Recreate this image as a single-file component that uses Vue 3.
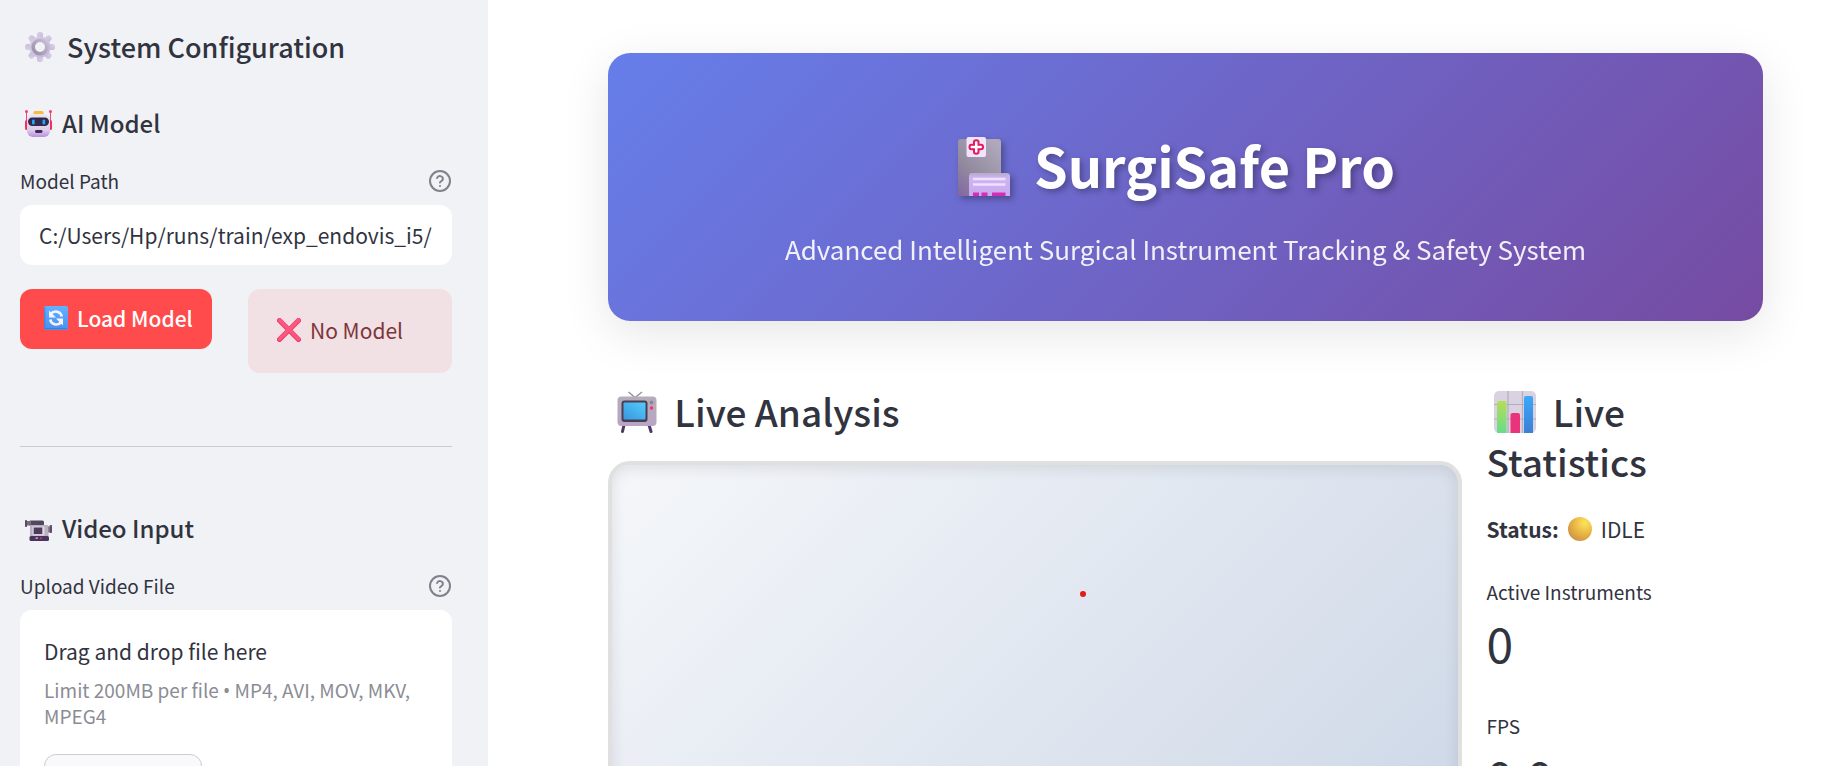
<script setup>
import { ref } from 'vue'

const modelPath = ref('C:/Users/Hp/runs/train/exp_endovis_i5/')
const metrics = [
  { label: 'Active Instruments', value: '0' },
  { label: 'FPS', value: '0.0' },
]
</script>

<template>
  <div class="shell">
    <aside class="sidebar">
      <h2 class="side-title">
        <svg class="gear" viewBox="0 0 30 30" aria-hidden="true">
          <defs>
            <linearGradient id="gearBody" x1="0" y1="0" x2="1" y2="1">
              <stop offset="0" stop-color="#d9d2e6" /><stop offset="1" stop-color="#c3b4da" />
            </linearGradient>
            <linearGradient id="gearRing" x1="1" y1="0" x2="0" y2="1">
              <stop offset="0" stop-color="#c6bfd0" /><stop offset="1" stop-color="#9a8dab" />
            </linearGradient>
          </defs>
          <g fill="url(#gearBody)">
            <rect v-for="n in 8" :key="n" x="12" y="0" width="6" height="9" rx="2.6" :transform="`rotate(${n * 45} 15 15)`" />
            <circle cx="15" cy="15" r="10.6" />
          </g>
          <circle cx="15" cy="15" r="6.8" fill="#f0f2f6" stroke="url(#gearRing)" stroke-width="3.6" />
        </svg>
        <span>System Configuration</span>
      </h2>

      <h3 class="side-heading">
        <svg class="side-icon" viewBox="0 0 27 27" aria-hidden="true">
          <defs>
            <linearGradient id="botFace" x1="0" y1="0" x2="0" y2="1">
              <stop offset="0" stop-color="#ece6f3" /><stop offset=".7" stop-color="#dccdea" /><stop offset="1" stop-color="#bb8fe0" />
            </linearGradient>
          </defs>
          <path d="M1.5 1.5V12M25.5 1.5V12" stroke="#ef4672" stroke-width="1" />
          <circle cx="1.5" cy="1.6" r="1.5" fill="#fa3c64" /><circle cx="25.5" cy="1.6" r="1.5" fill="#fa3c64" />
          <rect x="0" y="10" width="3" height="10" rx="1.5" fill="#f52e62" /><rect x="24" y="10" width="3" height="10" rx="1.5" fill="#f52e62" />
          <rect x="8.5" y="1" width="10" height="4" rx="1.5" fill="#f9bd3c" />
          <rect x="2" y="4" width="23" height="23" rx="6" fill="url(#botFace)" />
          <rect x="3" y="7.5" width="21" height="8.5" rx="4.2" fill="#35284f" />
          <rect x="7" y="9.5" width="2.7" height="5" rx="1.3" fill="#1fa9f5" /><rect x="17.5" y="9.5" width="2.7" height="5" rx="1.3" fill="#1fa9f5" />
          <rect x="10" y="20" width="7.5" height="3" rx="1.4" fill="#3d2a56" />
        </svg>
        <span>AI Model</span>
      </h3>

      <div class="field-head">
        <label for="model-path">Model Path</label>
        <button class="help" type="button" aria-label="Help for model path">
          <svg viewBox="0 0 24 24" aria-hidden="true"><circle cx="12" cy="12" r="10" /><path d="M9.1 9a3 3 0 0 1 5.8 1c0 2-3 2.7-3 3.5M12 17h.01" /></svg>
        </button>
      </div>
      <input id="model-path" v-model="modelPath" class="text-input" type="text" />

      <div class="model-row">
        <button class="load" type="button">
          <svg class="inline-icon" viewBox="0 0 24 24" aria-hidden="true">
            <defs>
              <linearGradient id="syncTile" x1="0" y1="0" x2="0" y2="1"><stop offset="0" stop-color="#62b1ff" /><stop offset="1" stop-color="#4a90ec" /></linearGradient>
            </defs>
            <rect width="24" height="24" rx="2" fill="url(#syncTile)" />
            <path d="M.8 1.5V22.5H22.5" fill="none" stroke="#3f7fdd" stroke-width="1" />
            <path d="M7 7.7A6.2 6.2 0 0 1 17.8 10.5M17 16.3A6.2 6.2 0 0 1 6.2 13.5" fill="none" stroke="#f4f3ff" stroke-width="2.6" />
            <path d="M5 4.5V11.5H12ZM19 19.5V12.5H12Z" fill="#f4f3ff" />
          </svg>
          <span>Load Model</span>
        </button>
        <div class="alert" role="status">
          <svg class="inline-icon" viewBox="0 0 24 24" aria-hidden="true">
            <path d="M2.5 2.5L21.5 21.5M21.5 2.5L2.5 21.5" stroke="#e83a68" stroke-width="5" stroke-linecap="round" />
            <path d="M2.6 2.2L21.5 21M21.5 2.2L2.6 21" stroke="#ff5680" stroke-width="3.6" stroke-linecap="round" />
          </svg>
          <span>No Model</span>
        </div>
      </div>

      <hr class="rule" />

      <h3 class="side-heading">
        <svg class="side-icon" viewBox="0 0 27 27" aria-hidden="true">
          <rect x="4" y="5.5" width="15" height="5" rx="1.5" fill="#54465f" />
          <rect x="1" y="6" width="5" height="4.5" fill="#786b80" /><rect x="0" y="5" width="2" height="7" rx=".8" fill="#5b4967" />
          <rect x="5" y="10" width="18.5" height="12" rx="1.5" fill="#b9b0c0" />
          <rect x="7.5" y="11.5" width="12" height="9" rx="1" fill="#e1dae6" /><rect x="8.7" y="12.5" width="8.6" height="6.6" fill="#4d3c5c" />
          <rect x="23" y="11.5" width="2" height="6" fill="#8f8298" /><rect x="24.6" y="10" width="2.4" height="8" rx=".8" fill="#604e6d" />
          <rect x="4.5" y="21" width="19.5" height="5" rx="1.5" fill="#4b335f" />
          <rect x="10.5" y="22.5" width="2.5" height="1.2" fill="#d4cbdc" /><circle cx="16" cy="23.2" r="1" fill="#f22b55" />
        </svg>
        <span>Video Input</span>
      </h3>

      <div class="field-head">
        <span id="upload-label">Upload Video File</span>
        <button class="help" type="button" aria-label="Help for video upload">
          <svg viewBox="0 0 24 24" aria-hidden="true"><circle cx="12" cy="12" r="10" /><path d="M9.1 9a3 3 0 0 1 5.8 1c0 2-3 2.7-3 3.5M12 17h.01" /></svg>
        </button>
      </div>
      <section class="dropzone" aria-labelledby="upload-label">
        <p class="drop-title">Drag and drop file here</p>
        <p class="drop-limit">Limit 200MB per file <span class="bullet">•</span> MP4, AVI, MOV, MKV, MPEG4</p>
        <button class="browse" type="button">Browse files</button>
      </section>
    </aside>

    <main class="main">
      <header class="banner">
        <h1 class="banner-title">
          <svg class="hospital" viewBox="0 0 52 60" aria-hidden="true">
            <defs>
              <linearGradient id="towerFill" x1="0" y1="1" x2=".8" y2="0"><stop offset="0" stop-color="#8365a3" /><stop offset=".4" stop-color="#918a9e" /><stop offset="1" stop-color="#b0a9bb" /></linearGradient>
              <linearGradient id="wingFill" x1="0" y1="0" x2="0" y2="1"><stop offset="0" stop-color="#b6aac9" /><stop offset=".2" stop-color="#cdb4ef" /><stop offset="1" stop-color="#c9aaf0" /></linearGradient>
            </defs>
            <path d="M0 59V5Q0 2 3 2H40Q43 2 43 5V59Z" fill="url(#towerFill)" />
            <path d="M11 59V39Q11 36 14 36H49Q52 36 52 39V59Z" fill="url(#wingFill)" />
            <path d="M15 42H47.5M15 47.5H47.5" stroke="#eee0ff" stroke-width="2.6" />
            <path d="M15 59V55.5H21V59ZM23.5 59V55.5H29.5V59ZM34 59V55.5H47.5V59Z" fill="#d62cb6" />
            <rect x="8.5" y="0" width="19.5" height="20" rx="2" fill="#f0e3fa" />
            <path d="M16 7V5Q16 3.2 18.25 3.2T20.5 5V7.7H23Q25 7.7 25 10T23 12.3H20.5V15Q20.5 16.8 18.25 16.8T16 15V12.3H13.5Q11.5 12.3 11.5 10T13.5 7.7H16Z" fill="#fff" stroke="#e3175c" stroke-width="2" />
          </svg>
          <span>SurgiSafe Pro</span>
        </h1>
        <p class="banner-sub">Advanced Intelligent Surgical Instrument Tracking &amp; Safety System</p>
      </header>

      <div class="columns">
        <section>
          <h2 class="section-title">
            <svg class="title-icon" viewBox="0 0 42 42" aria-hidden="true">
              <defs>
                <linearGradient id="tvScreen" x1="1" y1="0" x2="0" y2="1"><stop offset="0" stop-color="#50cdfc" /><stop offset="1" stop-color="#3b95df" /></linearGradient>
                <linearGradient id="tvBody" x1="0" y1="0" x2="0" y2="1"><stop offset="0" stop-color="#b5adb9" /><stop offset="1" stop-color="#b8a5c5" /></linearGradient>
              </defs>
              <path d="M12.5 1L19 6.5L26 1" fill="none" stroke="#96919b" stroke-width="1.4" />
              <path d="M8 34L6.5 40.5M33 34L35 40.5" stroke="#4e3764" stroke-width="3" stroke-linecap="round" />
              <rect x="1.5" y="5.5" width="39" height="29.5" rx="4" fill="url(#tvBody)" />
              <rect x="5.5" y="9.5" width="26" height="21.5" rx="3" fill="#493e54" />
              <rect x="7.5" y="11.5" width="22" height="17" rx="1" fill="url(#tvScreen)" />
              <circle cx="35.5" cy="11.5" r="1.9" fill="#8e8797" /><circle cx="35.5" cy="17" r="1.7" fill="#f23367" />
            </svg>
            Live Analysis
          </h2>
          <div class="video">
            <span class="marker"></span>
          </div>
        </section>

        <section>
          <h2 class="section-title">
            <svg class="title-icon" viewBox="0 0 42 42" aria-hidden="true">
              <defs>
                <linearGradient id="barGreen" x1="0" y1="0" x2="0" y2="1"><stop offset="0" stop-color="#b3df55" /><stop offset="1" stop-color="#67dc8a" /></linearGradient>
                <linearGradient id="barBlue" x1="0" y1="0" x2="0" y2="1"><stop offset="0" stop-color="#3ba8fb" /><stop offset="1" stop-color="#3c7fd5" /></linearGradient>
              </defs>
              <rect width="42" height="42" rx="5" fill="#d9d2e0" />
              <path d="M14 0V42M28.5 0V42M0 13.5H42M0 28H42" stroke="#b4abbf" stroke-width="1.2" />
              <path d="M3 42V12Q3 10 5 10H10.5Q12.5 10 12.5 12V42Z" fill="url(#barGreen)" />
              <path d="M16.5 42V24Q16.5 22 18.5 22H24Q26 22 26 24V42Z" fill="#e9337a" />
              <path d="M30 42V7Q30 5 32 5H37Q39 5 39 7V42Z" fill="url(#barBlue)" />
            </svg>
            Live Statistics
          </h2>
          <p class="status">
            <strong>Status:</strong>
            <svg class="inline-icon" viewBox="0 0 24 24" aria-hidden="true">
              <defs>
                <radialGradient id="idleDot" cx=".7" cy=".25" r=".85"><stop offset="0" stop-color="#ffe45c" /><stop offset=".6" stop-color="#e5b143" /><stop offset="1" stop-color="#cc8f45" /></radialGradient>
              </defs>
              <circle cx="12" cy="12" r="12" fill="url(#idleDot)" />
            </svg>
            <span>IDLE</span>
          </p>
          <dl class="metrics">
            <div v-for="m in metrics" :key="m.label" class="metric">
              <dt>{{ m.label }}</dt>
              <dd>{{ m.value }}</dd>
            </div>
          </dl>
        </section>
      </div>
    </main>
  </div>
</template>

<style>
body {
  margin: 0;
  background: #fff;
}
</style>

<style scoped>
* {
  box-sizing: border-box;
}
.shell {
  display: flex;
  height: 100vh;
  overflow: hidden;
  font-family: "Noto Sans CJK SC", "Noto Sans", sans-serif;
  font-size: 21px;
  color: #31333f;
}
h1, h2, h3, p, dl, dd {
  margin: 0;
}
svg {
  flex: none;
}
button, input {
  font: inherit;
  color: inherit;
}
.sidebar {
  flex: none;
  width: 488px;
  padding: 29px 36px 0 20px;
  background: #f0f2f6;
  overflow: auto;
  scrollbar-width: none;
}
.side-title {
  display: flex;
  align-items: center;
  gap: 12px;
  padding-left: 5px;
  font-size: 27px;
  line-height: 36px;
  font-weight: 500;
}
.gear {
  width: 30px;
  height: 30px;
}
.side-heading {
  display: flex;
  align-items: center;
  gap: 10px;
  margin-top: 42px;
  padding-left: 5px;
  font-size: 24px;
  line-height: 32px;
  font-weight: 500;
}
.side-icon {
  width: 27px;
  height: 27px;
}
.field-head {
  display: flex;
  align-items: center;
  justify-content: space-between;
  margin: 30px 0 12px;
  font-size: 19px;
  line-height: 24px;
}
.help {
  display: flex;
  padding: 0;
  border: 0;
  background: none;
}
.help svg {
  width: 24px;
  height: 24px;
  fill: none;
  stroke: #7f818b;
  stroke-width: 2;
  stroke-linecap: round;
  stroke-linejoin: round;
}
.text-input {
  display: block;
  width: 100%;
  height: 60px;
  padding: 0 13px 0 19px;
  border: 0;
  border-radius: 12px;
  background: #fff;
  outline: none;
}
.model-row {
  display: flex;
  align-items: flex-start;
  justify-content: space-between;
  margin-top: 24px;
}
.inline-icon {
  width: 24px;
  height: 24px;
}
.load, .alert {
  display: flex;
  align-items: center;
  gap: 9px;
  border-radius: 12px;
  white-space: nowrap;
}
.load {
  width: 192px;
  height: 60px;
  padding: 0 0 2px 24px;
  border: 0;
  background: #ff4b4b;
  color: #fff;
  font-weight: 500;
}
.alert {
  width: 204px;
  height: 84px;
  padding: 0 0 2px 29px;
  background: #f1e0e4;
  color: #7d353b;
}
.rule {
  height: 1px;
  margin: 73px 0 65px;
  border: 0;
  background: #c9cbd1;
}
.rule + .side-heading {
  margin-top: 0;
}
.dropzone {
  padding: 25px 24px;
  border-radius: 12px;
  background: #fff;
}
.drop-title {
  line-height: 32px;
}
.drop-limit {
  margin: 10px 0 25px;
  font-size: 19px;
  line-height: 26px;
  color: #8b8d95;
}
.bullet {
  font-family: "Noto Sans", sans-serif;
  line-height: 1;
}
.browse {
  width: 158px;
  height: 60px;
  padding: 0;
  border: 1px solid #cccdd2;
  border-radius: 12px;
  background: #f9f9fb;
}
.main {
  flex: 1;
  min-width: 0;
  padding: 53px 59px 0 120px;
  overflow: auto;
  scrollbar-width: none;
}
.banner {
  padding: 76px 48px 52px;
  border-radius: 22px;
  background: linear-gradient(135deg, #667eea 0%, #764ba2 100%);
  box-shadow: 0 12px 48px rgba(0, 0, 0, 0.1);
  color: #fff;
  text-align: center;
}
.banner-title {
  display: flex;
  align-items: center;
  justify-content: center;
  gap: 24px;
  padding-right: 18px;
  font-size: 54px;
  line-height: 72px;
  font-weight: 700;
  text-shadow: 3px 3px 6px rgba(0, 0, 0, 0.3);
}
.hospital {
  width: 52px;
  height: 60px;
  margin-top: 4px;
  filter: drop-shadow(3px 3px 3px rgba(0, 0, 0, 0.3));
}
.banner-sub {
  margin-top: 28px;
  font-size: 26px;
  line-height: 40px;
  opacity: 0.9;
}
.columns {
  display: grid;
  grid-template-columns: minmax(0, 3.09fr) minmax(0, 1fr);
  gap: 24px;
  margin-top: 65px;
}
.section-title {
  margin-bottom: 25px;
  font-size: 37px;
  line-height: 50px;
  font-weight: 500;
}
.title-icon {
  width: 42px;
  height: 42px;
  margin: 0 8px;
  vertical-align: -6px;
}
.video {
  position: relative;
  height: 700px;
  border: 4px solid #e0e0e0;
  border-radius: 22px;
  background: linear-gradient(135deg, #f5f7fa 0%, #c3cfe2 100%);
  box-shadow: inset 0 3px 15px rgba(0, 0, 0, 0.1);
}
.marker {
  position: absolute;
  left: 468px;
  top: 126px;
  width: 6px;
  height: 6px;
  border-radius: 50%;
  background: #e21b1b;
}
.status {
  display: flex;
  align-items: center;
  gap: 9px;
  line-height: 36px;
}
.status strong {
  font-weight: 600;
}
.metrics {
  display: flex;
  flex-direction: column;
  gap: 40px;
  margin-top: 31px;
}
.metric dt {
  font-size: 19px;
  line-height: 28px;
}
.metric dd {
  margin-top: 6px;
  font-size: 48px;
  line-height: 60px;
}
</style>
